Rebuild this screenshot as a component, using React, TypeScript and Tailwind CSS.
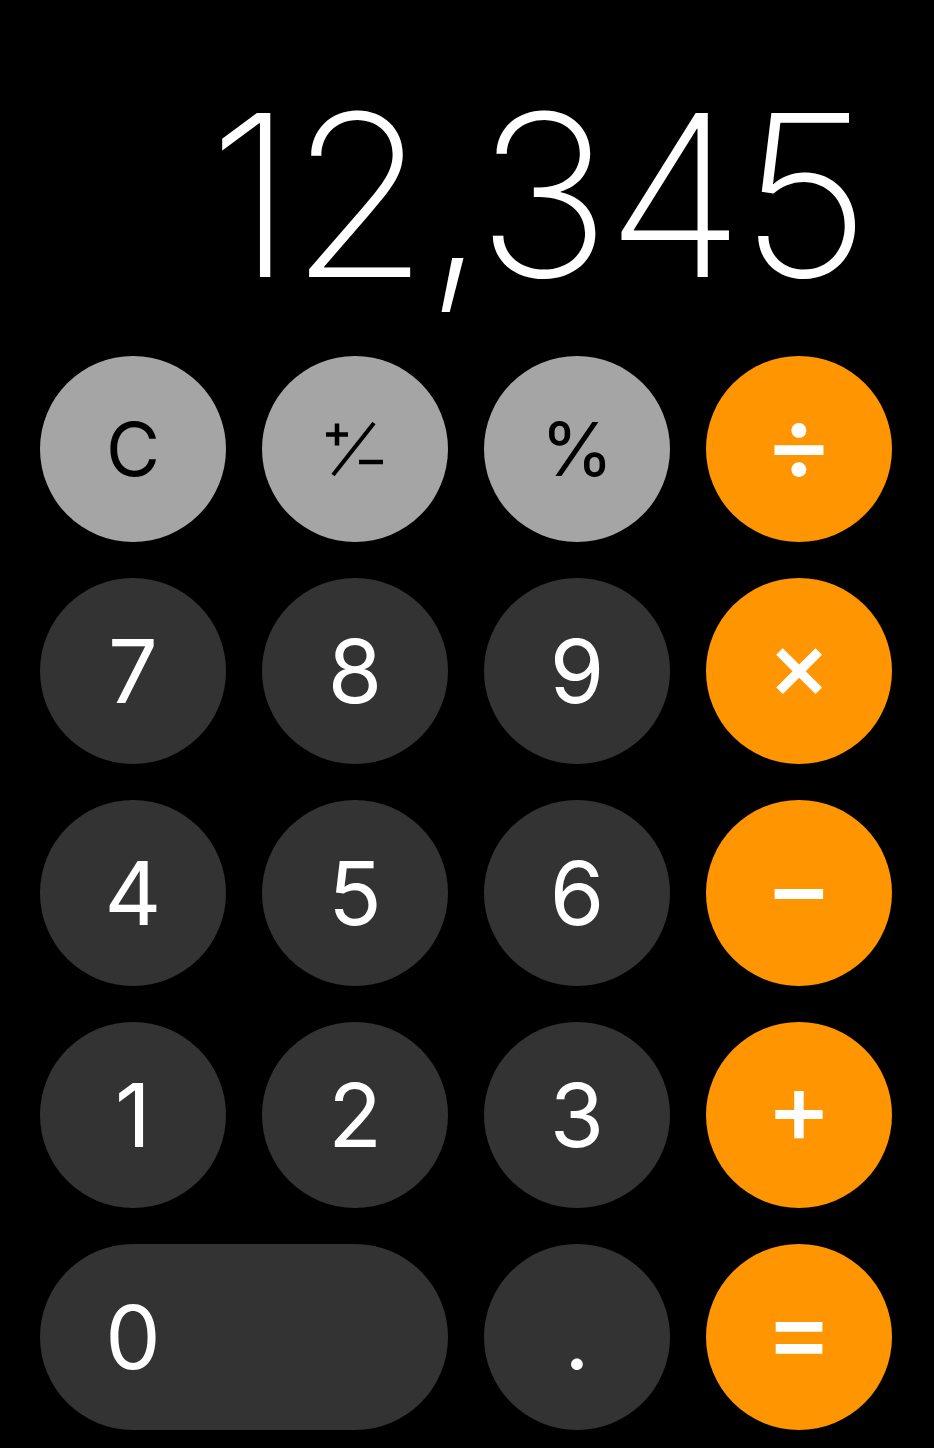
import React from 'react';

type Kind = 'fn' | 'num' | 'op';

interface Key {
    label: string;
    kind: Kind;
    wide?: boolean;
    size?: string;
}

const keys: Key[] = [
    { label: 'C', kind: 'fn' },
    { label: '+/-', kind: 'fn' },
    { label: '%', kind: 'fn' },
    { label: '÷', kind: 'op', size: 'text-[104px]' },
    { label: '7', kind: 'num' },
    { label: '8', kind: 'num' },
    { label: '9', kind: 'num' },
    { label: '×', kind: 'op', size: 'text-[96px]' },
    { label: '4', kind: 'num' },
    { label: '5', kind: 'num' },
    { label: '6', kind: 'num' },
    { label: '−', kind: 'op', size: 'text-[103px]' },
    { label: '1', kind: 'num' },
    { label: '2', kind: 'num' },
    { label: '3', kind: 'num' },
    { label: '+', kind: 'op', size: 'text-[98px]' },
    { label: '0', kind: 'num', wide: true },
    { label: '.', kind: 'num' },
    { label: '=', kind: 'op', size: 'text-[102px]' },
];

// SF-symbol style "plus.forwardslash.minus"
function PlusSlashMinus() {
    return (
        <svg width="58" height="54" viewBox="0 0 58 54" fill="none" stroke="#000" strokeWidth="4.5">
            <path d="M0 12.5h22M11 1.5v22" />
            <path d="M48 1 L7 53" strokeWidth="4" />
            <path d="M33 40h24" />
        </svg>
    );
}

function CalcKey({ k }: { k: Key }) {
    const base = 'h-[186px] rounded-full flex items-center leading-none select-none';
    const colour =
        k.kind === 'fn' ? 'bg-[#a5a5a5] text-black' :
        k.kind === 'op' ? 'bg-[#ff9500] text-white' :
        'bg-[#333333] text-white';

    if (k.wide) {
        return (
            <button className={`${base} ${colour} col-span-2 justify-start`}>
                <span className="w-[186px] flex justify-center text-[88px] font-normal">{k.label}</span>
            </button>
        );
    }

    let label: React.ReactNode = k.label;
    let size = 'text-[88px] font-normal';
    if (k.kind === 'fn') size = 'text-[74px] font-normal';
    // operator glyphs sit on the math axis, nudge them up to the key centre
    if (k.kind === 'op') size = `${k.size} font-medium pb-[14px]`;
    if (k.label === '+/-') label = <PlusSlashMinus />;

    return (
        <button className={`${base} ${colour} justify-center ${size}`}>
            {label}
        </button>
    );
}

export default function App() {
    return (
        <div className="w-[934px] h-[1448px] bg-black overflow-hidden flex flex-col" style={{ fontFamily: 'Inter, "Noto Sans", sans-serif' }}>
            {/* Display */}
            <div className="h-[356px] flex justify-end items-start pt-[82px] pr-[68px]">
                <div className="text-white text-[226px] font-extralight leading-none tracking-[-4.5px]">12,345</div>
            </div>

            {/* Keypad */}
            <div className="grid grid-cols-[repeat(4,186px)] auto-rows-[186px] gap-[36px] pl-[40px]">
                {keys.map((k) => (
                    <CalcKey key={k.label} k={k} />
                ))}
            </div>
        </div>
    );
}
